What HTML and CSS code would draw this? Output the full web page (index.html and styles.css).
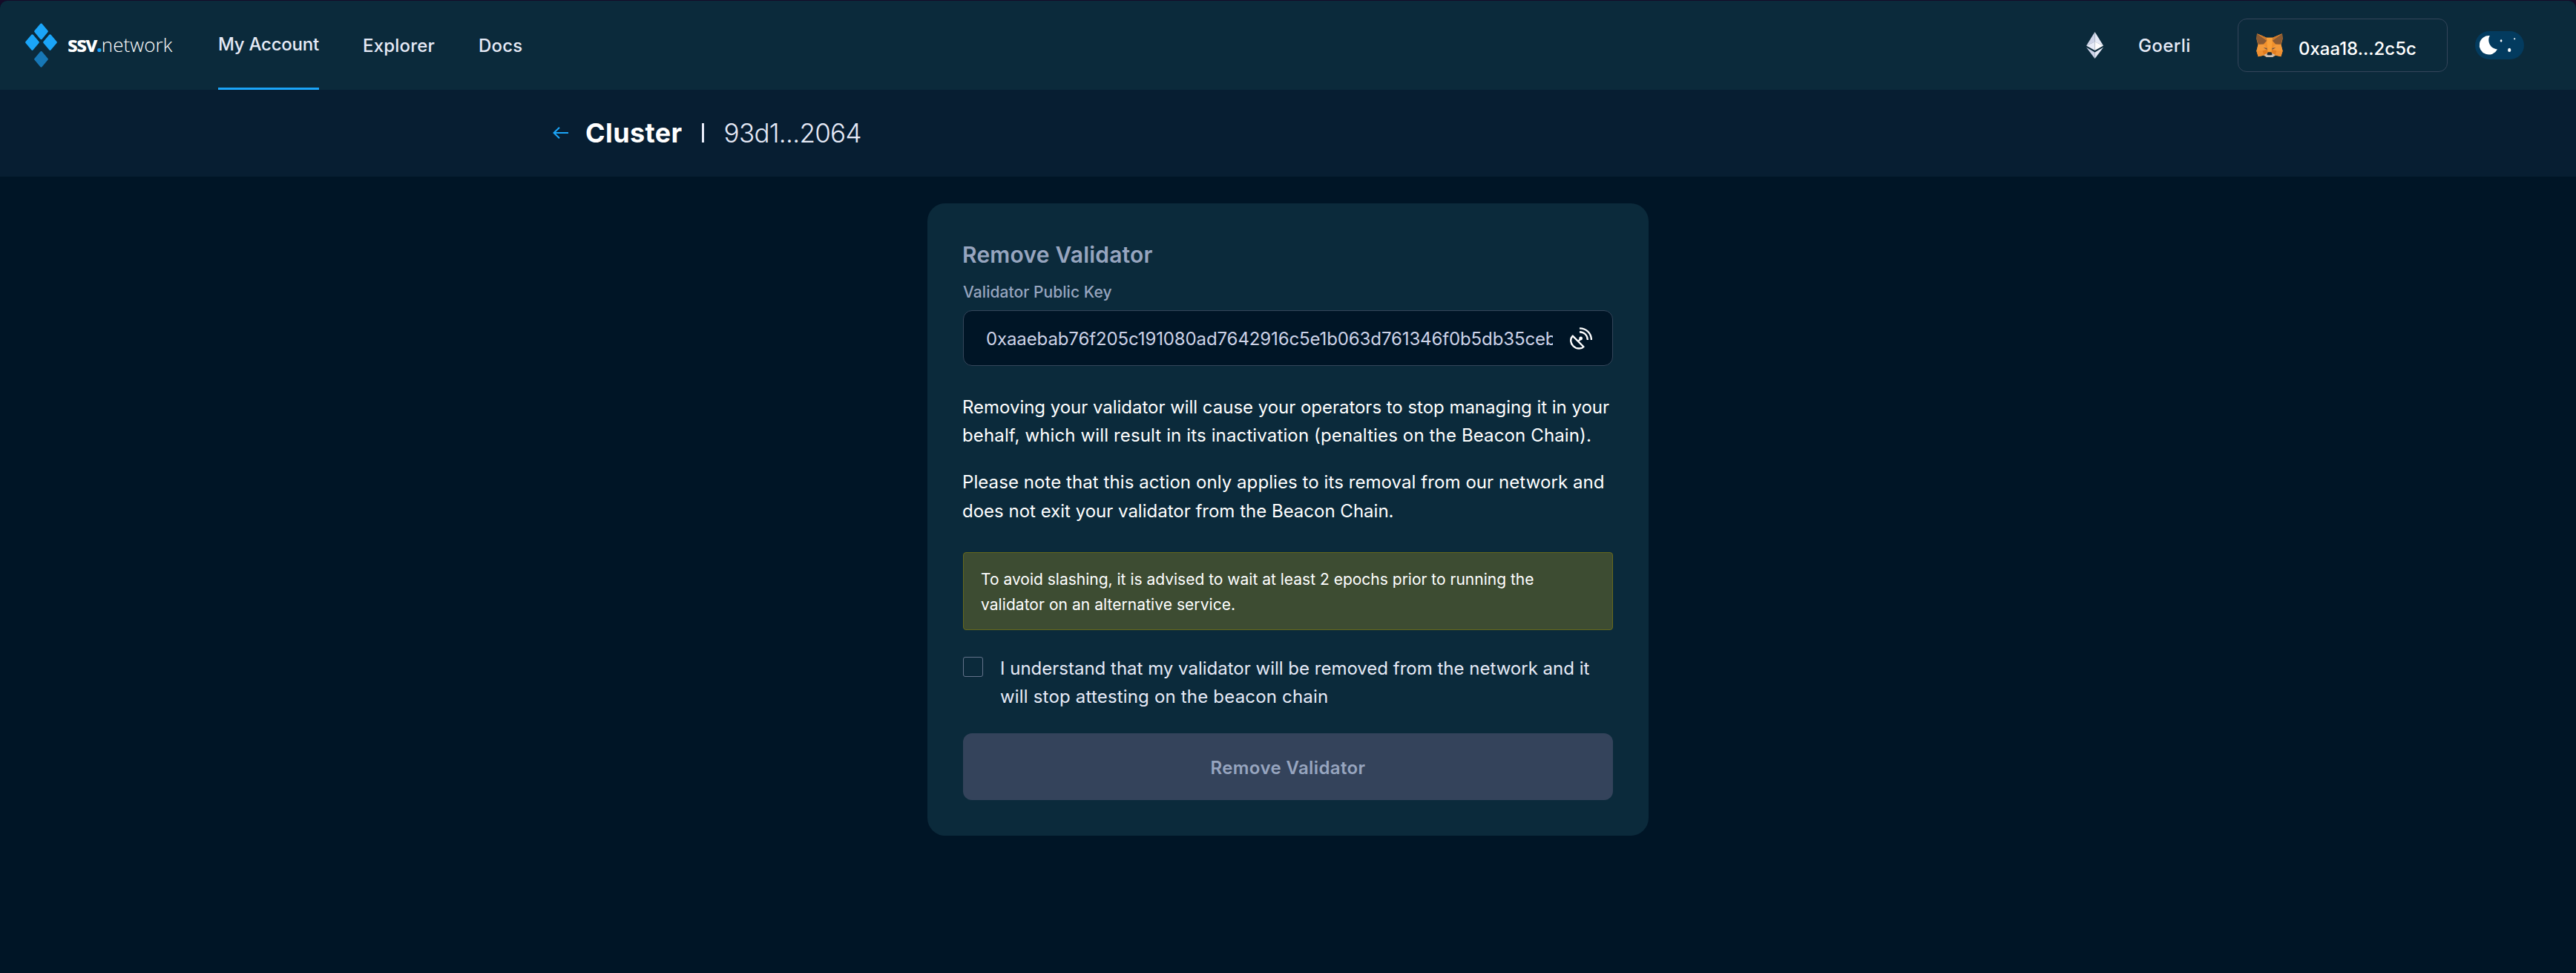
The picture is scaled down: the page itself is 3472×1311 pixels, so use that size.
FILE: index.html
```html
<!DOCTYPE html>
<html lang="en">
<head>
<meta charset="utf-8">
<title>SSV Network - Remove Validator</title>
<link rel="stylesheet" href="styles.css">
</head>
<body>
<div class="frame">
<header class="header">
  <a class="logo">
    <svg class="logo-mark" viewBox="0 0 43 60" width="43" height="60">
      <g stroke-linejoin="round" stroke-width="3" fill="#1ba5f8" stroke="#1ba5f8">
        <path d="M21.5 2 29.3 11.3 21.5 20.7 13.7 11.3Z"/>
        <path d="M9.5 16.8 17.3 26 9.5 35.3 1.7 26Z"/>
        <path d="M33.5 16.8 41.3 26 33.5 35.3 25.7 26Z"/>
        <path d="M21.5 39.5 29.3 48.8 21.5 58.1 13.7 48.8Z" fill="#1777b5" stroke="#1777b5"/>
      </g>
    </svg>
    <span class="wordmark"><b class="word-bold">ssv</b><b class="word-dot">.</b><span class="word-light">network</span></span>
  </a>
  <nav class="nav">
    <a class="nav-link nav-link-active">My Account</a>
    <a class="nav-link">Explorer</a>
    <a class="nav-link">Docs</a>
  </nav>
  <div class="network">
    <svg viewBox="0 0 23 36" width="23" height="36">
      <path d="M11.5 0 0 18.5 11.5 13.5Z" fill="#cdd3e8"/>
      <path d="M11.5 0 23 18.5 11.5 13.5Z" fill="#e6eaf7"/>
      <path d="M0 18.5 11.5 13.2V25Z" fill="#e6eaf7"/>
      <path d="M23 18.5 11.5 13.2V25Z" fill="#fdfcfe"/>
      <path d="M0 20.7 11.5 27.5V36Z" fill="#cdd3e8"/>
      <path d="M23 20.7 11.5 27.5V36Z" fill="#e6eaf7"/>
    </svg>
    <span>Goerli</span>
  </div>
  <div class="wallet">
    <svg viewBox="0 0 108 96" width="36" height="32">
      <path d="M3 1 42 17H66L105 1 107 22 101 46 107 71 100 94 78 89 66 96H42L30 89 8 94 1 71 7 46 1 22Z" fill="#f0902c"/>
      <path d="M42 17H66L61 74H47Z" fill="#f9a038"/>
      <path d="M3 1 43 29 29 44 8 44 2 22Z" fill="#8a5a33"/>
      <path d="M105 1 65 29 79 44 100 44 106 22Z" fill="#8a5a33"/>
      <path d="M3 1 42 17 43 29ZM105 1 66 17 65 29Z" fill="#cf7a2d"/>
      <path d="M8 46 29 44 48 65 25 70 1 71ZM100 46 79 44 60 65 83 70 107 71Z" fill="#f39a3b"/>
      <path d="M25 70 45 66 44 77 31 88ZM83 70 63 66 64 77 77 88Z" fill="#e07c20"/>
      <path d="M1 71 25 70 31 88 8 94ZM107 71 83 70 77 88 100 94Z" fill="#ee8f31"/>
      <path d="M29 58 43 59 44 66ZM79 58 65 59 64 66Z" fill="#5c4a45"/>
      <path d="M31 87 45 80H63L77 87 66 96H42Z" fill="#c9bdb3"/>
      <path d="M47 76H61L65 85 61 88H47L43 85Z" fill="#202a33"/>
    </svg>
    <span class="wallet-address">0xaa18...2c5c</span>
  </div>
  <svg class="theme-toggle" viewBox="0 0 66 38" width="66" height="38">
    <rect width="66" height="38" rx="19" fill="#033b5f"/>
    <path d="M19.800 6A12.800 12.800 0 1 0 30 24.500 12.500 12.500 0 0 1 19.800 6Z" fill="#fff"/>
    <ellipse cx="46.200" cy="25.400" rx="2.100" ry="2.600" fill="#fff"/>
    <path d="M35.100 10.800 36.700 13 35.100 15 33.500 13Z" fill="#fff"/>
    <circle cx="53.200" cy="10.300" r="1.100" fill="#fff"/>
  </svg>
</header>
<div class="subheader">
  <svg class="back" viewBox="0 0 22 16" width="22" height="16" fill="none" stroke="#1ba5f8" stroke-width="2">
    <path d="M21 8H1.500M9 .800 1.500 8 9 15.200"/>
  </svg>
  <h1 class="crumb">Cluster</h1>
  <span class="crumb-rule"></span>
  <span class="crumb-id">93d1...2064</span>
</div>
<main class="main">
  <section class="card">
    <h2 class="card-title">Remove Validator</h2>
    <div class="label">Validator Public Key</div>
    <div class="field">
      <span class="field-value">0xaaebab76f205c191080ad7642916c5e1b063d761346f0b5db35ceb</span>
      <svg viewBox="0 0 88 88" width="30" height="30" fill="none" stroke="#fff" stroke-width="7">
        <path d="M11 34 54 77C46 86 26 87 13 74 0 61 1 44 11 34Z" stroke-linejoin="round"/>
        <path d="M33 55 43 45"/>
        <circle cx="43" cy="44" r="7" fill="#fff" stroke="none"/>
        <path d="M38 18.500C57 19 69 31 70 50M38 4C65 4 84 23 85 50"/>
      </svg>
    </div>
    <p class="note">
      <span class="line l1">Removing your validator will cause your operators to stop managing it in your</span>
      <span class="line l2">behalf, which will result in its inactivation (penalties on the Beacon Chain).</span>
    </p>
    <p class="note note-next">
      <span class="line l3">Please note that this action only applies to its removal from our network and</span>
      <span class="line">does not exit your validator from the Beacon Chain.</span>
    </p>
    <div class="warning">
      <span class="line">To avoid slashing, it is advised to wait at least 2 epochs prior to running the</span>
      <span class="line l4">validator on an alternative service.</span>
    </div>
    <label class="confirm">
      <span class="checkbox"></span>
      <span>
        <span class="line">I understand that my validator will be removed from the network and it</span>
        <span class="line l5">will stop attesting on the beacon chain</span>
      </span>
    </label>
    <button class="submit" disabled>Remove Validator</button>
  </section>
</main>
</div>
</body>
</html>
```
FILE: styles.css
```css
* { box-sizing: border-box; }
body {
  margin: 0;
  background: #150c28;
  font-family: Inter, "Liberation Sans", sans-serif;
  font-size: 24px;
  color: #fff;
}
h1, h2, p { margin: 0; }
svg { display: block; flex: none; }
.frame {
  margin-top: 1px;
  min-height: 1310px;
  background: #001526;
  border-radius: 10px 10px 0 0;
  overflow: hidden;
}

.header {
  display: flex;
  align-items: center;
  height: 120px;
  padding: 0 70.5px 0 34px;
  background: #0b2a3b;
}
.logo { display: flex; align-items: center; width: 260px; }
.wordmark {
  margin: -3px 0 0 14px;
  font-family: "Open Sans", sans-serif;
  line-height: 40px;
  white-space: nowrap;
}
.word-bold { font-size: 28px; letter-spacing: -1.7px; }
.word-dot { font-size: 30px; color: #1ba5f8; letter-spacing: -1.5px; }
.word-light { font-size: 26px; font-weight: 350; letter-spacing: .1px; }
.nav { display: flex; gap: 59px; height: 120px; }
.nav-link {
  display: flex;
  align-items: center;
  font-weight: 450;
  color: #e6eaf7;
  letter-spacing: .2px;
  white-space: nowrap;
}
.nav-link-active {
  width: 136px;
  border-bottom: 3px solid #1ba5f8;
  letter-spacing: -.25px;
}
.network {
  display: flex;
  align-items: center;
  gap: 47px;
  width: 204px;
  margin-left: auto;
  font-weight: 450;
  color: #e6eaf7;
  letter-spacing: .4px;
}
.wallet {
  display: flex;
  align-items: center;
  gap: 21px;
  width: 283px;
  height: 72px;
  margin-right: 36.5px;
  padding-left: 24px;
  border: 1px solid #34455a;
  border-radius: 12px;
}
.wallet-address { padding-top: 8px; font-weight: 500; letter-spacing: 0; }

.subheader {
  display: flex;
  align-items: center;
  height: 117px;
  padding: 0 0 1px 745px;
  background: #071e32;
}
.crumb { margin-left: 22px; font-size: 36px; font-weight: 700; letter-spacing: .38px; }
.crumb-rule { width: 3px; height: 26px; margin: 0 27px 0 26px; background: #e6eaf7; }
.crumb-id { font-size: 35px; font-weight: 300; letter-spacing: -.7px; color: #e6eaf7; }

.main { padding-top: 36px; }
.card {
  width: 972px;
  margin: 0 auto;
  padding: 48px;
  border-radius: 24px;
  background: #0b2a3b;
}
.card-title {
  margin-left: -1px;
  font-size: 30px;
  line-height: 42px;
  font-weight: 600;
  letter-spacing: .2px;
  color: #97a5bf;
}
.label {
  margin: 13px 0 7px;
  font-size: 21px;
  line-height: 34px;
  font-weight: 450;
  letter-spacing: .05px;
  color: #97a5bf;
}
.field {
  display: flex;
  align-items: center;
  justify-content: space-between;
  height: 75px;
  padding: 0 27px 0 30px;
  border: 1px solid #34455a;
  border-radius: 12px;
  background: #001526;
}
.field-value {
  width: 764px;
  padding-top: 2px;
  overflow: hidden;
  white-space: nowrap;
  letter-spacing: -.118px;
  color: #cdd3e8;
}
.line { display: block; white-space: nowrap; }
.note { margin: 37px 0 0 -1px; line-height: 38.4px; }
.note-next { margin-top: 24.6px; }
.l1 { letter-spacing: -.027px; }
.l2 { letter-spacing: .132px; }
.l3 { letter-spacing: .076px; }
.l4 { letter-spacing: .054px; }
.l5 { letter-spacing: .184px; }
.warning {
  height: 105px;
  margin-top: 35.8px;
  padding: 19px 24px 0 23px;
  border: 1px solid #65681c;
  border-radius: 4px;
  background: #3d4c32;
  font-size: 21px;
  line-height: 34px;
}
.confirm {
  display: flex;
  gap: 23px;
  margin-top: 33px;
  line-height: 38.4px;
  color: #e6eaf7;
}
.checkbox {
  width: 27px;
  height: 27px;
  margin-top: 3px;
  border: 1px solid #63728a;
  border-radius: 3px;
}
.submit {
  display: block;
  width: 100%;
  height: 90px;
  margin-top: 29.2px;
  padding: 2px 0 0;
  border: 0;
  border-radius: 12px;
  background: #34435b;
  color: #97a5bf;
  font: 600 24px Inter, sans-serif;
  letter-spacing: .38px;
}
```
